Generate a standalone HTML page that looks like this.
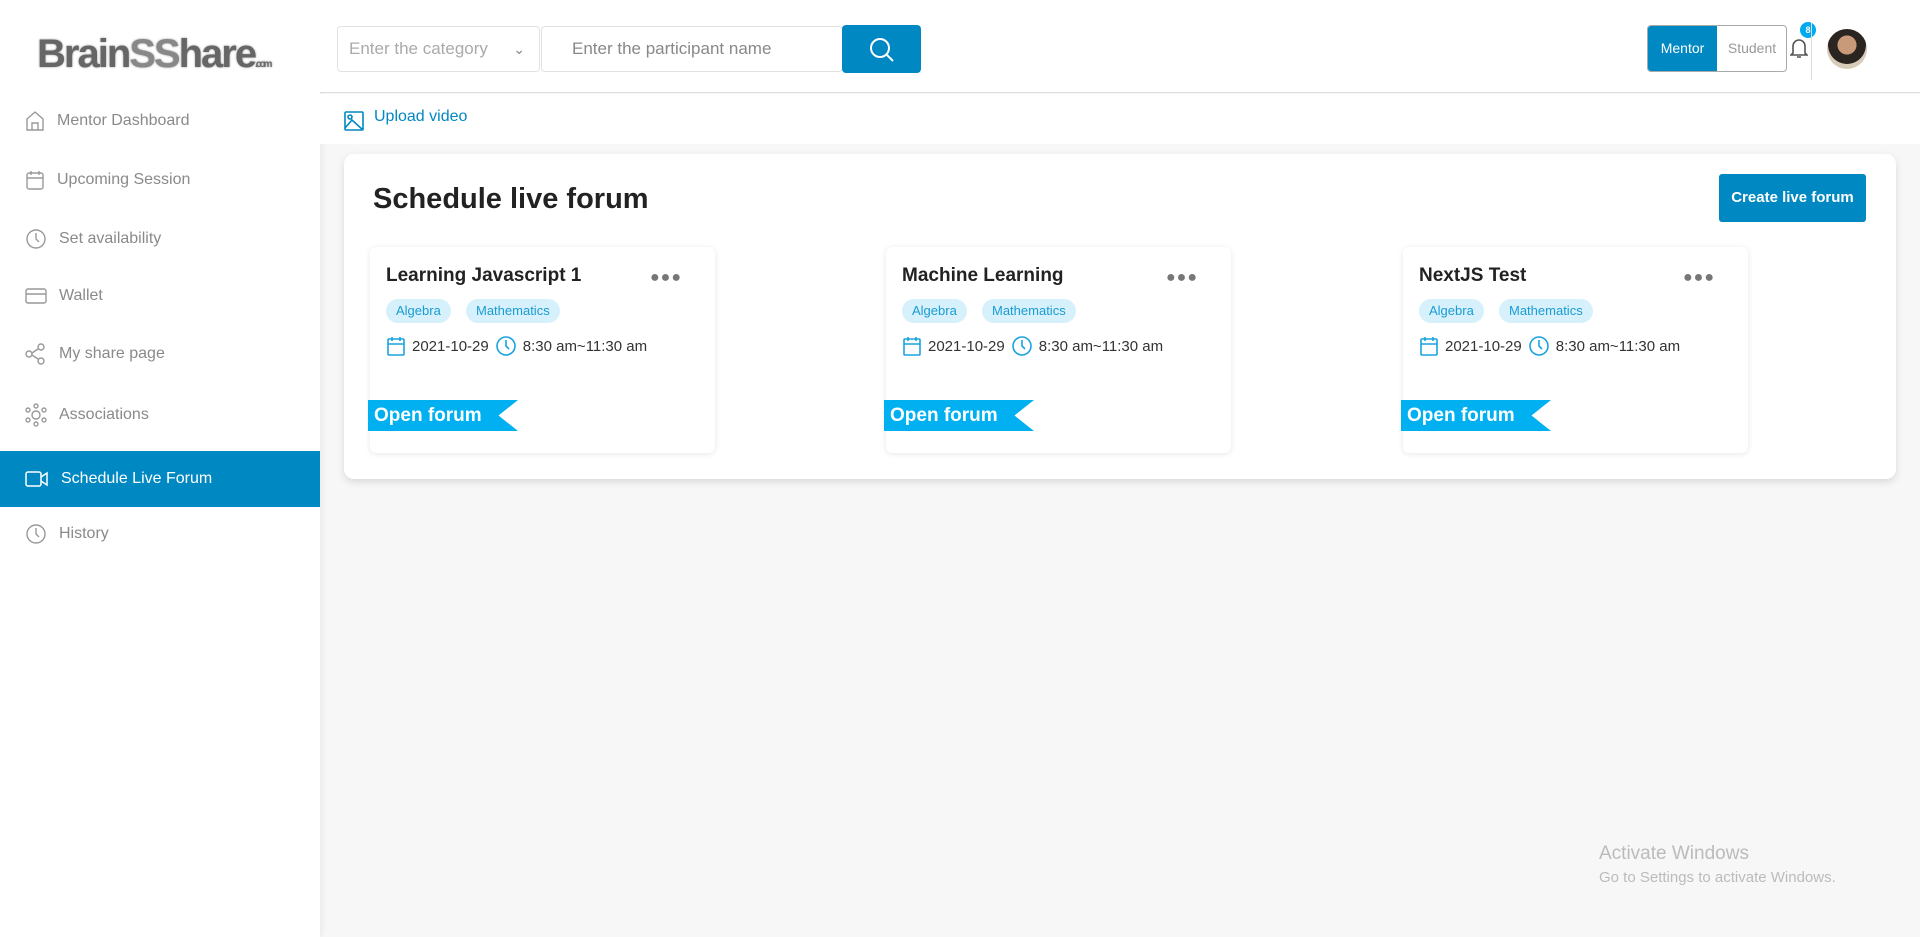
<!DOCTYPE html>
<html><head><meta charset="utf-8"><style>
*{box-sizing:border-box;margin:0;padding:0}
body{width:1920px;height:937px;overflow:hidden;font-family:"Liberation Sans",sans-serif;background:#f7f7f7;position:relative}
.side{position:absolute;left:0;top:0;width:320px;height:937px;background:#fff;box-shadow:2px 0 6px rgba(0,0,0,.06)}
.logo{position:absolute;left:37px;top:32px;font-size:40px;font-weight:bold;color:#666;letter-spacing:-2px;text-shadow:0 0 2px #999}
.nav{position:absolute;left:0;width:320px;height:56px;display:flex;align-items:center;padding-left:25px;color:#8a8a8a;font-size:16px}
.nav svg{margin-right:12px}
.nav.act{background:#0088c2;color:#fff}
.top{position:absolute;left:320px;top:0;right:0;height:93px;background:#fff;border-bottom:1px solid #ddd}
.upl{position:absolute;left:320px;top:94px;right:0;height:50px;background:#fff}
.card{position:absolute;left:344px;top:154px;width:1552px;height:325px;background:#fff;border-radius:10px;box-shadow:0 3px 8px rgba(0,0,0,.12)}
.fc{position:absolute;top:93px;width:345px;height:206px;background:#fff;border-radius:6px;box-shadow:0 1px 6px rgba(0,0,0,.1)}
.fc h3{position:absolute;left:16px;top:18px;font-size:19px;color:#222}
.dots{position:absolute;left:280px;top:22px;font-size:16px;color:#777;letter-spacing:1px}
.tag{position:absolute;top:52px;height:24px;border-radius:12px;background:#d6f1fb;color:#1a9bd3;font-size:13px;line-height:24px;padding:0 10px}
.dt{position:absolute;left:16px;top:88px;font-size:15px;color:#333;display:flex;align-items:center;gap:6px}
.rib{position:absolute;left:-2px;top:153px;width:150px;height:31px;background:#00b0f0;color:#fff;font-weight:bold;font-size:19px;line-height:31px;padding-left:6px;clip-path:polygon(0 0,100% 0,87% 50%,100% 100%,0 100%)}
</style></head><body>
<div class="side">
<div class="logo">Brain<span style="color:#888">SS</span>hare<span style="font-size:10px">.com</span></div>
<div class="nav" style="top:93px"><svg width="20" height="22" viewBox="0 0 20 22" fill="none" stroke="#999" stroke-width="1.4"><path d="M2 9L10 2l8 7v11H2z M7 20v-7h6v7"/></svg>Mentor Dashboard</div>
<div class="nav" style="top:152px"><svg width="20" height="22" viewBox="0 0 20 22" fill="none" stroke="#999" stroke-width="1.4"><rect x="2" y="4" width="16" height="16" rx="2"/><path d="M2 9h16M6 2v4M14 2v4"/></svg>Upcoming Session</div>
<div class="nav" style="top:211px"><svg width="22" height="22" viewBox="0 0 22 22" fill="none" stroke="#999" stroke-width="1.4"><circle cx="11" cy="11" r="9"/><path d="M11 5v6l3 3"/></svg>Set availability</div>
<div class="nav" style="top:268px"><svg width="22" height="20" viewBox="0 0 22 20" fill="none" stroke="#999" stroke-width="1.4"><rect x="1" y="3" width="20" height="14" rx="2"/><path d="M1 8h20"/></svg>Wallet</div>
<div class="nav" style="top:326px"><svg width="22" height="22" viewBox="0 0 22 22" fill="none" stroke="#999" stroke-width="1.4"><circle cx="16" cy="4" r="3"/><circle cx="4" cy="11" r="3"/><circle cx="16" cy="18" r="3"/><path d="M7 10l6-4M7 12l6 4"/></svg>My share page</div>
<div class="nav" style="top:387px"><svg width="22" height="24" viewBox="0 0 22 24" fill="none" stroke="#999" stroke-width="1.4"><circle cx="11" cy="12" r="4"/><circle cx="11" cy="3" r="2"/><circle cx="11" cy="21" r="2"/><circle cx="3" cy="7" r="2"/><circle cx="19" cy="7" r="2"/><circle cx="3" cy="17" r="2"/><circle cx="19" cy="17" r="2"/></svg>Associations</div>
<div class="nav act" style="top:451px"><svg width="24" height="20" viewBox="0 0 24 20" fill="none" stroke="#fff" stroke-width="1.5"><rect x="1" y="3" width="15" height="14" rx="2"/><path d="M16 8l6-4v12l-6-4"/></svg>Schedule Live Forum</div>
<div class="nav" style="top:506px"><svg width="22" height="22" viewBox="0 0 22 22" fill="none" stroke="#999" stroke-width="1.4"><circle cx="11" cy="11" r="9"/><path d="M11 5v6l3 3"/></svg>History</div>
</div>
<div class="top">
<div style="position:absolute;left:17px;top:26px;width:203px;height:46px;border:1px solid #e2e2e2;border-radius:4px;color:#aaa;font-size:17px;line-height:44px;padding-left:11px">Enter the category<span style="position:absolute;right:14px;top:0;color:#888;font-size:14px">&#8964;</span></div>
<div style="position:absolute;left:221px;top:26px;width:302px;height:46px;border:1px solid #e2e2e2;border-radius:4px;color:#888;font-size:17px;line-height:44px;padding-left:30px">Enter the participant name</div>
<div style="position:absolute;left:522px;top:25px;width:79px;height:48px;background:#0088c2;border-radius:4px"><svg style="position:absolute;left:26px;top:11px" width="28" height="28" viewBox="0 0 28 28" fill="none" stroke="#fff" stroke-width="2"><circle cx="12" cy="12" r="9"/><path d="M19 19l6 6"/></svg></div>
<div style="position:absolute;left:1327px;top:25px;width:140px;height:47px;border:1px solid #aaa;border-radius:4px;overflow:hidden;font-size:14px"><div style="position:absolute;left:0;top:0;width:69px;height:47px;background:#0088c2;color:#fff;line-height:45px;text-align:center">Mentor</div><div style="position:absolute;left:69px;width:70px;line-height:45px;text-align:center;color:#999">Student</div></div>
<svg style="position:absolute;left:1470px;top:37px" width="18" height="22" viewBox="0 0 18 22" fill="none" stroke="#555" stroke-width="1.6"><path d="M3 16V9a6 6 0 0112 0v7l2 2H1z M7 20h4"/></svg>
<div style="position:absolute;left:1480px;top:22px;width:16px;height:16px;border-radius:50%;background:#00aaf0;color:#fff;font-size:9px;font-weight:bold;text-align:center;line-height:16px">8</div>
<div style="position:absolute;left:1491px;top:22px;width:1px;height:58px;background:#ddd"></div>
<div style="position:absolute;left:1507px;top:29px;width:40px;height:40px;border-radius:50%;background:radial-gradient(circle at 50% 40%,#c89a7a 0 30%,#2a2520 31% 60%,#d8cbb8 61%)"></div>
</div>
<div class="upl"><svg style="position:absolute;left:24px;top:16px" width="20" height="22" viewBox="0 0 20 22" fill="none" stroke="#0088c2" stroke-width="1.6"><rect x="1" y="2" width="18" height="18" rx="1"/><circle cx="6" cy="7" r="2"/><path d="M1 18l7-8 11 10"/></svg><span style="position:absolute;left:54px;top:14px;color:#0088c2;font-size:16px">Upload video</span></div>
<div class="card">
<div style="position:absolute;left:29px;top:29px;font-size:29px;font-weight:bold;color:#222">Schedule live forum</div>
<div style="position:absolute;left:1375px;top:20px;width:147px;height:48px;background:#0088c2;border-radius:3px;color:#fff;font-weight:bold;font-size:15px;line-height:48px;text-align:center">Create live forum</div>
<div class="fc" style="left:26px"><h3>Learning Javascript 1</h3><div class="dots">●●●</div><div class="tag" style="left:16px">Algebra</div><div class="tag" style="left:96px">Mathematics</div><div class="dt"><svg width="20" height="22" viewBox="0 0 20 22" fill="none" stroke="#1aa3e0" stroke-width="1.6"><rect x="2" y="4" width="16" height="16" rx="1"/><path d="M2 9h16M6 2v4M14 2v4"/></svg>2021-10-29 <svg width="22" height="22" viewBox="0 0 22 22" fill="none" stroke="#1aa3e0" stroke-width="1.6"><circle cx="11" cy="11" r="9"/><path d="M11 5v6l3 3"/></svg> 8:30 am~11:30 am</div><div class="rib">Open forum</div></div>
<div class="fc" style="left:542px"><h3>Machine Learning</h3><div class="dots">●●●</div><div class="tag" style="left:16px">Algebra</div><div class="tag" style="left:96px">Mathematics</div><div class="dt"><svg width="20" height="22" viewBox="0 0 20 22" fill="none" stroke="#1aa3e0" stroke-width="1.6"><rect x="2" y="4" width="16" height="16" rx="1"/><path d="M2 9h16M6 2v4M14 2v4"/></svg>2021-10-29 <svg width="22" height="22" viewBox="0 0 22 22" fill="none" stroke="#1aa3e0" stroke-width="1.6"><circle cx="11" cy="11" r="9"/><path d="M11 5v6l3 3"/></svg> 8:30 am~11:30 am</div><div class="rib">Open forum</div></div>
<div class="fc" style="left:1059px"><h3>NextJS Test</h3><div class="dots">●●●</div><div class="tag" style="left:16px">Algebra</div><div class="tag" style="left:96px">Mathematics</div><div class="dt"><svg width="20" height="22" viewBox="0 0 20 22" fill="none" stroke="#1aa3e0" stroke-width="1.6"><rect x="2" y="4" width="16" height="16" rx="1"/><path d="M2 9h16M6 2v4M14 2v4"/></svg>2021-10-29 <svg width="22" height="22" viewBox="0 0 22 22" fill="none" stroke="#1aa3e0" stroke-width="1.6"><circle cx="11" cy="11" r="9"/><path d="M11 5v6l3 3"/></svg> 8:30 am~11:30 am</div><div class="rib">Open forum</div></div>
</div>
<div style="position:absolute;left:1599px;top:843px;color:#bbb;font-size:19px">Activate Windows</div>
<div style="position:absolute;left:1599px;top:869px;color:#bbb;font-size:15px">Go to Settings to activate Windows.</div>
</body></html>
